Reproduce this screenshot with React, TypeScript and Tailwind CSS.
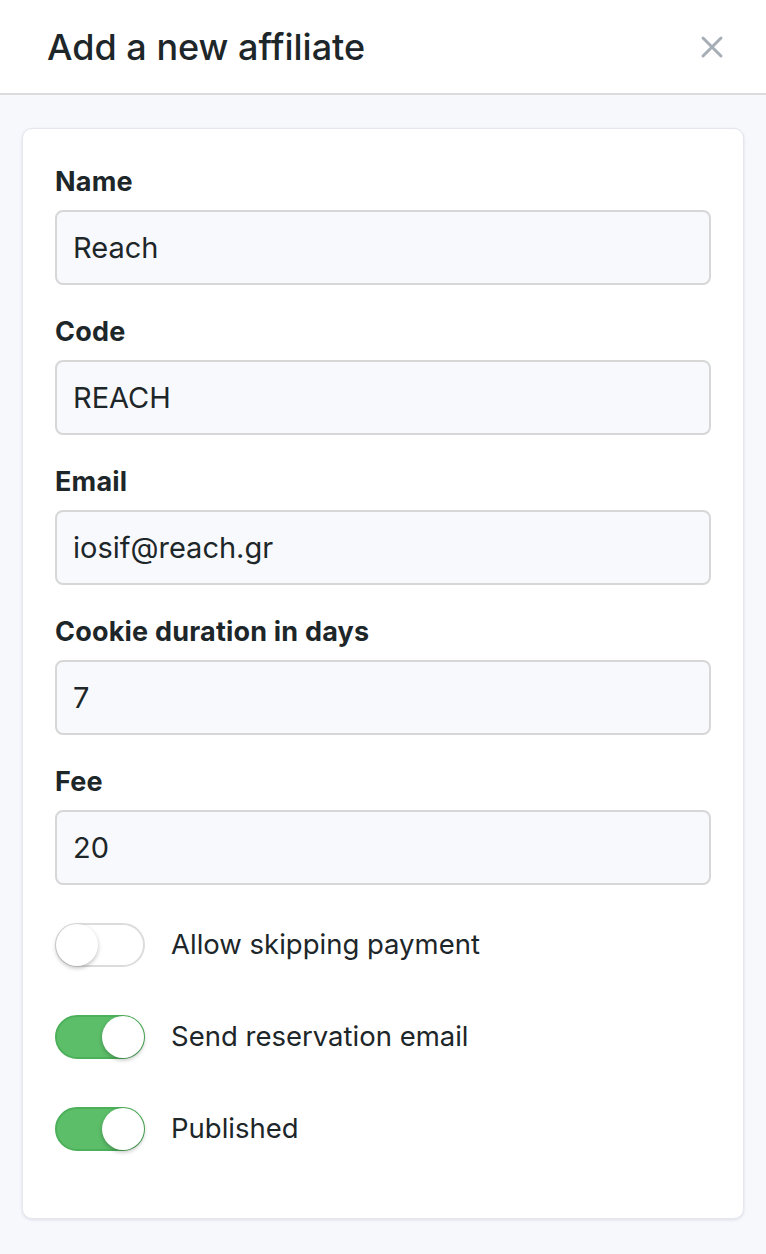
import { useState } from "react"

const fields = [
    { label: "Name", value: "Reach" },
    { label: "Code", value: "REACH" },
    { label: "Email", value: "iosif@reach.gr" },
    { label: "Cookie duration in days", value: "7" },
    { label: "Fee", value: "20" },
]

const Toggle = ({ on, onClick }: { on: boolean; onClick: () => void }) => (
    <button
        type="button"
        onClick={onClick}
        className={`relative h-[44px] w-[90px] shrink-0 rounded-full border-2 ${
            on ? "bg-[#5cbe69] border-[#4caf59]" : "bg-white border-[#dcdcdc]"
        }`}
    >
        <span
            className={`absolute top-[-1px] h-[42px] w-[42px] rounded-full bg-white shadow-[0_2px_4px_rgba(0,0,0,0.25)] ${
                on ? "right-[-1px]" : "left-[-1px]"
            }`}
        />
    </button>
)

export default function App() {
    const [toggles, setToggles] = useState([
        { label: "Allow skipping payment", on: false },
        { label: "Send reservation email", on: true },
        { label: "Published", on: true },
    ])

    const flip = (i: number) => {
        setToggles(toggles.map((t, j) => (j === i ? { ...t, on: !t.on } : t)))
    }

    return (
        <div className="min-h-[1254px] w-full bg-[#f7f8fc] font-['Inter',sans-serif] text-[#1d2629]">
            <div className="flex h-[95px] items-center justify-between border-b-2 border-[#dcdcdc] bg-white pl-[47px] pr-[42px]">
                <h1 className="text-[36px] font-medium">Add a new affiliate</h1>
                <svg width="24" height="24" viewBox="0 0 24 24" className="text-[#a7adb5]">
                    <path d="M3 3L21 21M21 3L3 21" stroke="currentColor" strokeWidth="3" strokeLinecap="round" />
                </svg>
            </div>
            <div className="px-[22px] pt-[33px]">
                <div className="rounded-[10px] border border-[#e6e7ee] bg-white px-[32px] pt-[38px] pb-[67px] shadow-[0_1px_3px_rgba(40,40,90,0.12)]">
                    <div className="flex flex-col gap-[32px]">
                        {fields.map((f) => (
                            <div key={f.label} className="flex flex-col">
                                <label className="text-[27px] font-bold leading-[30px] tracking-[0.2px]">{f.label}</label>
                                <div className="mt-[13px] flex h-[75px] items-center rounded-[8px] border-2 border-[#d7d7d7] bg-[#f8f9fc] px-[16px] text-[29px]">
                                    {f.value}
                                </div>
                            </div>
                        ))}
                    </div>
                    <div className="mt-[38px] flex flex-col gap-[48px]">
                        {toggles.map((t, i) => (
                            <div key={t.label} className="flex items-center gap-[26px]">
                                <Toggle on={t.on} onClick={() => flip(i)} />
                                <span className="text-[27.5px]">{t.label}</span>
                            </div>
                        ))}
                    </div>
                </div>
            </div>
        </div>
    )
}
